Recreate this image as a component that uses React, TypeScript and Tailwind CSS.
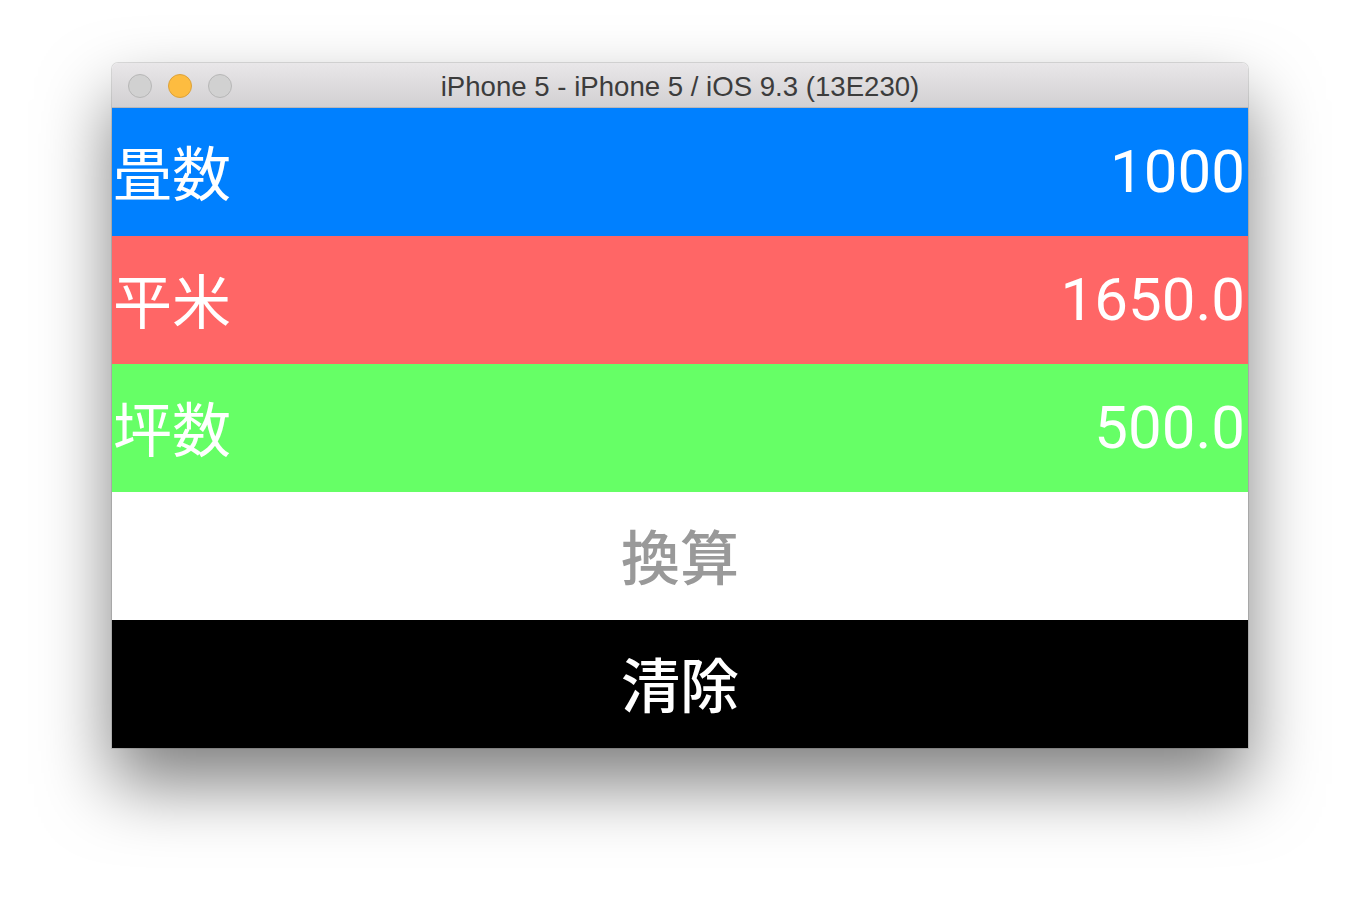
const cjk = '"Noto Sans CJK JP", "Noto Sans CJK SC", sans-serif';
const num = 'Roboto, "Noto Sans", sans-serif';

const rows = [
  { label: "畳数", value: "1000", bg: "bg-[#0080ff]" },
  { label: "平米", value: "1650.0", bg: "bg-[#ff6666]" },
  { label: "坪数", value: "500.0", bg: "bg-[#66ff66]" },
];

export default function App() {
  return (
    <div className="h-[908px] w-[1360px] overflow-hidden bg-white pl-[112px] pt-[63px]">
      <div className="w-[1136px] overflow-hidden rounded-t-[6px] shadow-[0_36px_70px_rgba(0,0,0,0.5),0_0_0_1px_rgba(0,0,0,0.12)]">
        <div className="relative flex h-[45px] items-center justify-center border-b border-[#b9b7b9] bg-gradient-to-b from-[#e9e7e9] to-[#d2d0d2] pt-[4px]">
          <div className="absolute left-[16px] top-[11px] flex gap-[16px]">
            <span className="h-[24px] w-[24px] rounded-full border border-[#b7b7b7] bg-[#d1d1d1]" />
            <span className="h-[24px] w-[24px] rounded-full border border-[#dca23a] bg-[#fdbc40]" />
            <span className="h-[24px] w-[24px] rounded-full border border-[#b7b7b7] bg-[#d1d1d1]" />
          </div>
          <span className="text-[27.6px] leading-none text-[#3c3c3c]" style={{ fontFamily: '"Liberation Sans", Arial, sans-serif' }}>
            iPhone 5 - iPhone 5 / iOS 9.3 (13E230)
          </span>
        </div>
        {rows.map((r) => (
          <div key={r.label} className={`flex h-[128px] items-center justify-between ${r.bg} pb-[4px] pl-[1px] pr-[3px] text-white`}>
            <span className="text-[59px] leading-none" style={{ fontFamily: cjk }}>{r.label}</span>
            <span className="pt-[4px] text-[60px] leading-none" style={{ fontFamily: num }}>{r.value}</span>
          </div>
        ))}
        <div className="flex h-[128px] items-center justify-center bg-white pb-[4px]">
          <span className="text-[59px] font-medium leading-none text-[#999999]" style={{ fontFamily: cjk }}>換算</span>
        </div>
        <div className="flex h-[128px] items-center justify-center bg-black pb-[4px]">
          <span className="text-[59px] font-medium leading-none text-white" style={{ fontFamily: cjk }}>清除</span>
        </div>
      </div>
    </div>
  );
}
